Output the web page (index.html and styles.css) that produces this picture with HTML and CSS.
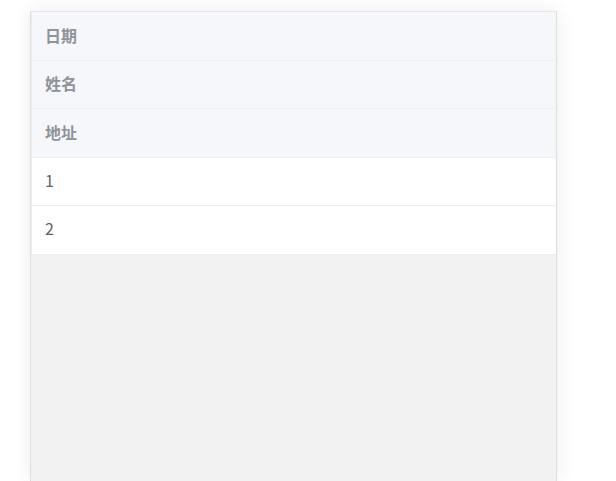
FILE: index.html
```html
<!DOCTYPE html>
<html lang="zh">
<head>
<meta charset="utf-8">
<link rel="stylesheet" href="styles.css">
</head>
<body>
<div class="page">
  <div class="panel">
    <div class="grid">
      <div class="row head">日期</div>
      <div class="row head">姓名</div>
      <div class="row head">地址</div>
      <div class="row body">1</div>
      <div class="row body">2</div>
    </div>
  </div>
</div>
</body>
</html>
```
FILE: styles.css
```css
html, body {
  margin: 0;
  padding: 0;
  background: #ffffff;
  overflow: hidden;
}
.page {
  padding: 11px 0 0 30px;
  height: 481px;
  box-sizing: border-box;
}
.panel {
  width: 527px;
  height: 470px;
  box-sizing: border-box;
  border: 1px solid #dedede;
  border-top-color: #e8e8ec;
  border-bottom: none;
  background: #f2f2f2;
  box-shadow: 0 0 18px rgba(0, 0, 0, 0.08);
}
.grid {
  display: flex;
  flex-direction: column;
  font-family: "Noto Sans CJK SC", "Microsoft YaHei", sans-serif;
  font-size: 16px;
  border-left: 1px solid #ebeef5;
}
.row {
  height: 48.6px;
  box-sizing: border-box;
  padding: 0 13px 2px;
  border-bottom: 1px solid #ebeef5;
  display: flex;
  align-items: center;
}
.head {
  background: #f5f7fa;
  color: #909399;
  font-weight: bold;
}
.body {
  background: #ffffff;
  color: #606266;
  padding-bottom: 4px;
}
```
